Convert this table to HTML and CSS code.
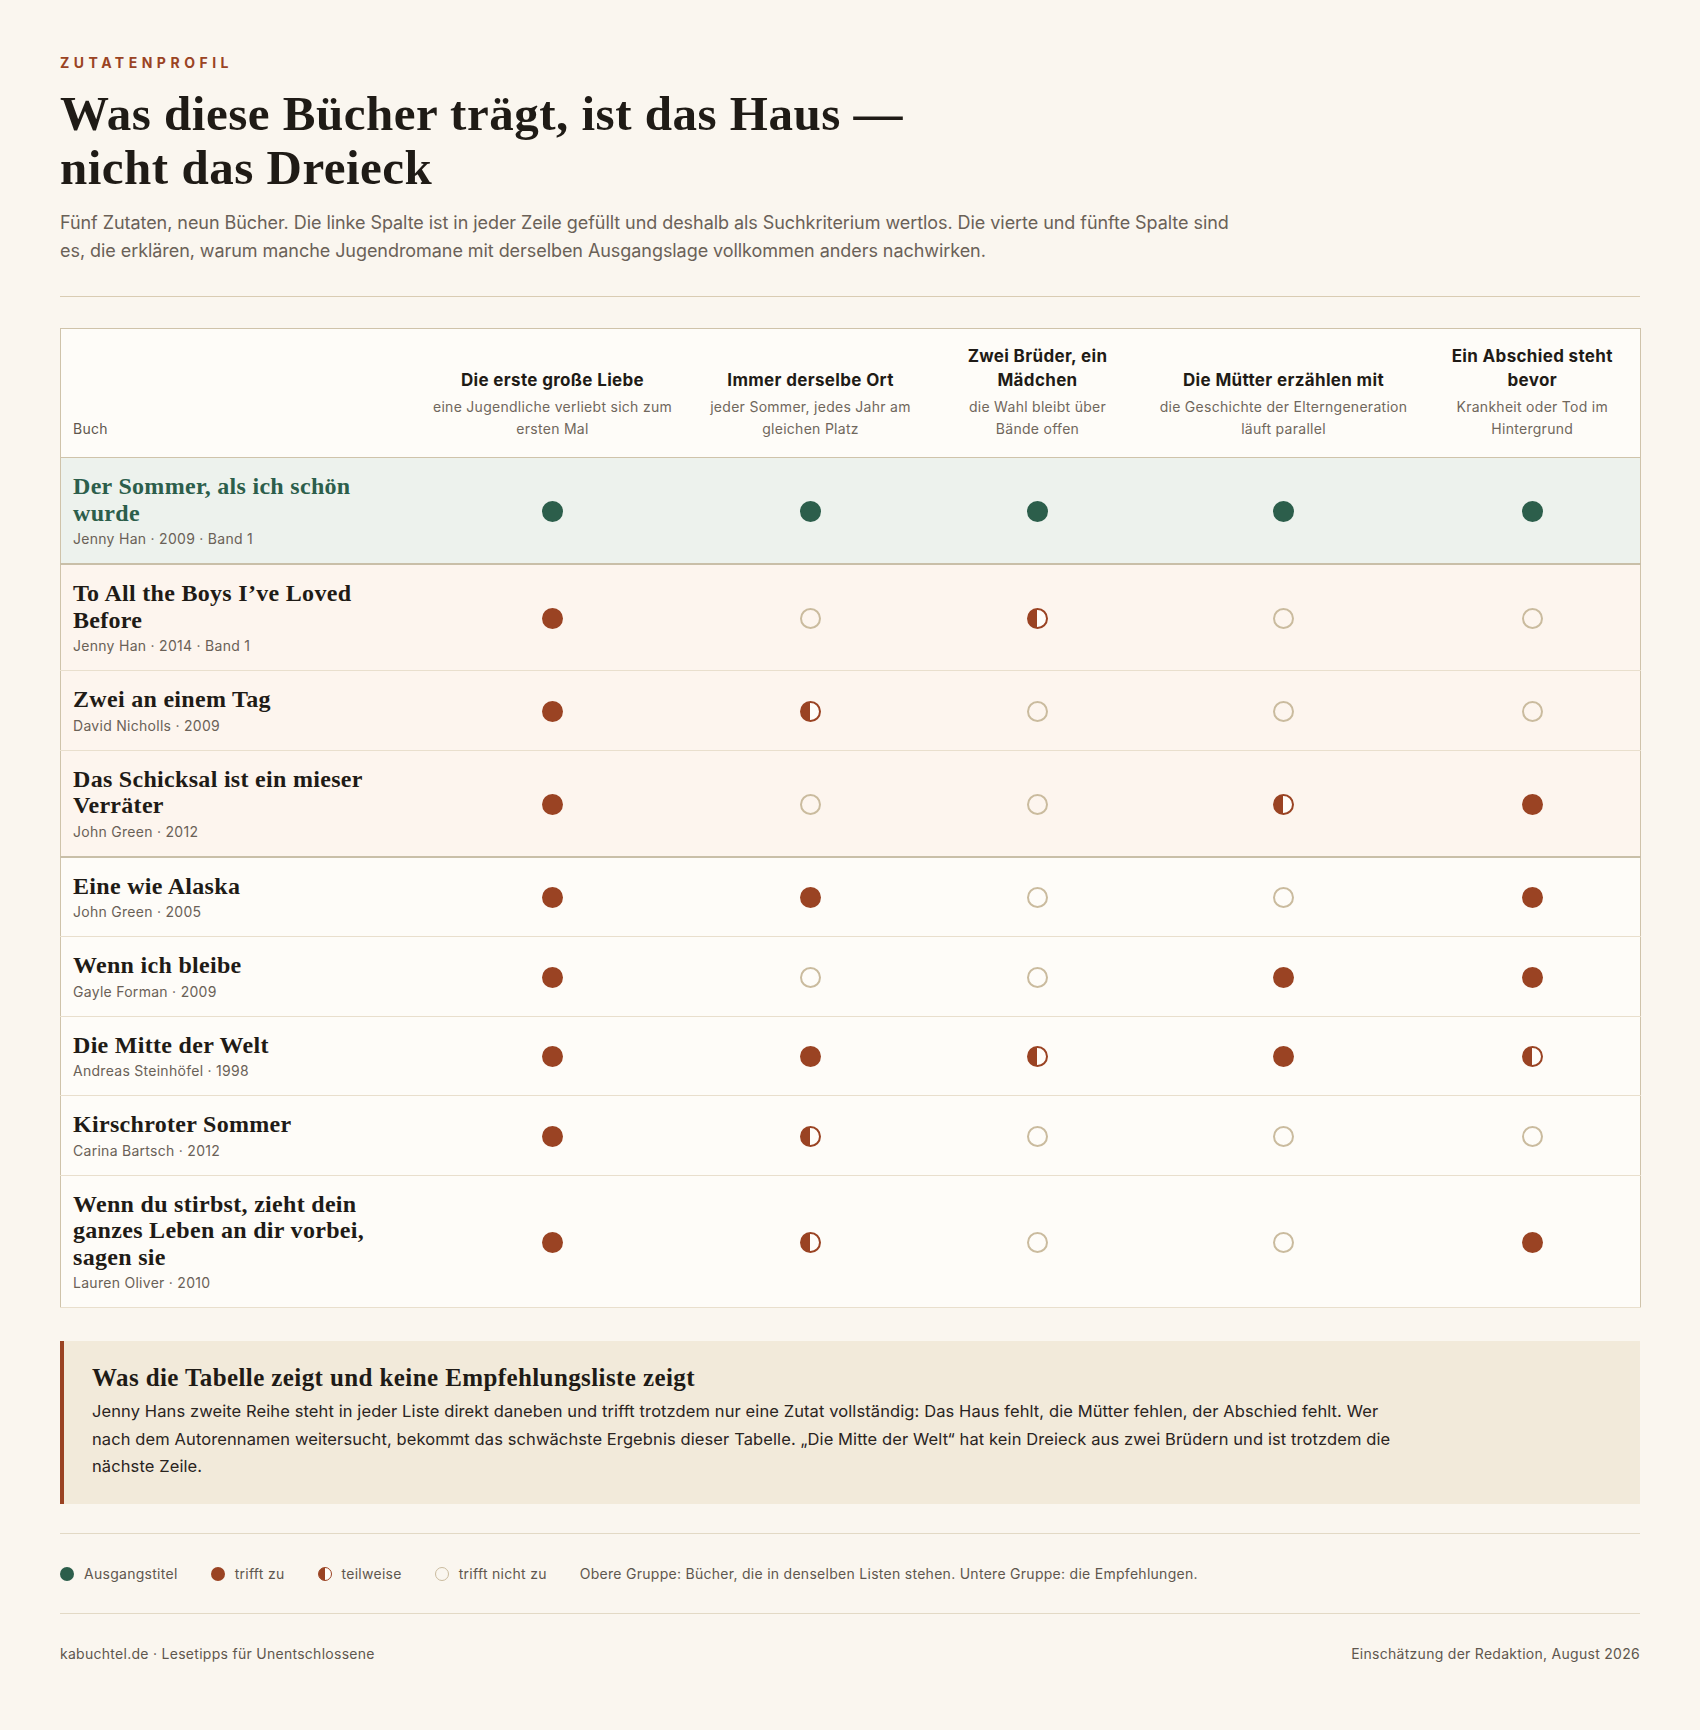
FILE: index.html
```html
<!DOCTYPE html>
<html lang="de">
<head>
<meta charset="utf-8">
<title>Zutatenprofil</title>
<link rel="stylesheet" href="styles.css">
</head>
<body>
<main class="page">
  <header class="intro">
    <div class="eyebrow">Zutatenprofil</div>
    <h1 class="headline">Was diese Bücher trägt, ist das Haus —<br>nicht das Dreieck</h1>
    <p class="lede">Fünf Zutaten, neun Bücher. Die linke Spalte ist in jeder Zeile gefüllt und deshalb als Suchkriterium wertlos. Die vierte und fünfte Spalte sind es, die erklären, warum manche Jugendromane mit derselben Ausgangslage vollkommen anders nachwirken.</p>
  </header>

  <table class="matrix">
    <colgroup>
      <col class="c-book"><col class="c-1"><col class="c-2"><col class="c-3"><col class="c-4"><col class="c-5">
    </colgroup>
    <thead>
      <tr>
        <th class="h-book">Buch</th>
        <th><span class="h-title">Die erste große Liebe</span><span class="h-sub">eine Jugendliche verliebt sich zum ersten Mal</span></th>
        <th><span class="h-title">Immer derselbe Ort</span><span class="h-sub">jeder Sommer, jedes Jahr am gleichen Platz</span></th>
        <th><span class="h-title">Zwei Brüder, ein Mädchen</span><span class="h-sub">die Wahl bleibt über Bände offen</span></th>
        <th><span class="h-title">Die Mütter erzählen mit</span><span class="h-sub">die Geschichte der Elterngeneration läuft parallel</span></th>
        <th><span class="h-title">Ein Abschied steht bevor</span><span class="h-sub">Krankheit oder Tod im Hintergrund</span></th>
      </tr>
    </thead>
    <tbody>
      <tr class="row-origin">
        <td class="book"><div class="b-title">Der Sommer, als ich schön wurde</div><div class="b-meta">Jenny Han · 2009 · Band 1</div></td>
        <td><span class="dot origin"></span></td>
        <td><span class="dot origin"></span></td>
        <td><span class="dot origin"></span></td>
        <td><span class="dot origin"></span></td>
        <td><span class="dot origin"></span></td>
      </tr>
      <tr class="row-list">
        <td class="book"><div class="b-title">To All the Boys I’ve Loved Before</div><div class="b-meta">Jenny Han · 2014 · Band 1</div></td>
        <td><span class="dot full"></span></td>
        <td><span class="dot none"></span></td>
        <td><span class="dot half"></span></td>
        <td><span class="dot none"></span></td>
        <td><span class="dot none"></span></td>
      </tr>
      <tr class="row-list">
        <td class="book"><div class="b-title">Zwei an einem Tag</div><div class="b-meta">David Nicholls · 2009</div></td>
        <td><span class="dot full"></span></td>
        <td><span class="dot half"></span></td>
        <td><span class="dot none"></span></td>
        <td><span class="dot none"></span></td>
        <td><span class="dot none"></span></td>
      </tr>
      <tr class="row-list row-last">
        <td class="book"><div class="b-title">Das Schicksal ist ein mieser Verräter</div><div class="b-meta">John Green · 2012</div></td>
        <td><span class="dot full"></span></td>
        <td><span class="dot none"></span></td>
        <td><span class="dot none"></span></td>
        <td><span class="dot half"></span></td>
        <td><span class="dot full"></span></td>
      </tr>
      <tr>
        <td class="book"><div class="b-title">Eine wie Alaska</div><div class="b-meta">John Green · 2005</div></td>
        <td><span class="dot full"></span></td>
        <td><span class="dot full"></span></td>
        <td><span class="dot none"></span></td>
        <td><span class="dot none"></span></td>
        <td><span class="dot full"></span></td>
      </tr>
      <tr>
        <td class="book"><div class="b-title">Wenn ich bleibe</div><div class="b-meta">Gayle Forman · 2009</div></td>
        <td><span class="dot full"></span></td>
        <td><span class="dot none"></span></td>
        <td><span class="dot none"></span></td>
        <td><span class="dot full"></span></td>
        <td><span class="dot full"></span></td>
      </tr>
      <tr>
        <td class="book"><div class="b-title">Die Mitte der Welt</div><div class="b-meta">Andreas Steinhöfel · 1998</div></td>
        <td><span class="dot full"></span></td>
        <td><span class="dot full"></span></td>
        <td><span class="dot half"></span></td>
        <td><span class="dot full"></span></td>
        <td><span class="dot half"></span></td>
      </tr>
      <tr>
        <td class="book"><div class="b-title">Kirschroter Sommer</div><div class="b-meta">Carina Bartsch · 2012</div></td>
        <td><span class="dot full"></span></td>
        <td><span class="dot half"></span></td>
        <td><span class="dot none"></span></td>
        <td><span class="dot none"></span></td>
        <td><span class="dot none"></span></td>
      </tr>
      <tr>
        <td class="book"><div class="b-title">Wenn du stirbst, zieht dein ganzes Leben an dir vorbei, sagen sie</div><div class="b-meta">Lauren Oliver · 2010</div></td>
        <td><span class="dot full"></span></td>
        <td><span class="dot half"></span></td>
        <td><span class="dot none"></span></td>
        <td><span class="dot none"></span></td>
        <td><span class="dot full"></span></td>
      </tr>
    </tbody>
  </table>

  <aside class="callout">
    <h2 class="callout-title">Was die Tabelle zeigt und keine Empfehlungsliste zeigt</h2>
    <p class="callout-text">Jenny Hans zweite Reihe steht in jeder Liste direkt daneben und trifft trotzdem nur eine Zutat vollständig: Das Haus fehlt, die Mütter fehlen, der Abschied fehlt. Wer nach dem Autorennamen weitersucht, bekommt das schwächste Ergebnis dieser Tabelle. „Die Mitte der Welt“ hat kein Dreieck aus zwei Brüdern und ist trotzdem die nächste Zeile.</p>
  </aside>

  <div class="legend">
    <span class="legend-item"><span class="ldot origin"></span>Ausgangstitel</span>
    <span class="legend-item"><span class="ldot full"></span>trifft zu</span>
    <span class="legend-item"><span class="ldot half"></span>teilweise</span>
    <span class="legend-item"><span class="ldot none"></span>trifft nicht zu</span>
    <span class="legend-note">Obere Gruppe: Bücher, die in denselben Listen stehen. Untere Gruppe: die Empfehlungen.</span>
  </div>

  <footer class="footer">
    <span>kabuchtel.de · Lesetipps für Unentschlossene</span>
    <span>Einschätzung der Redaktion, August 2026</span>
  </footer>
</main>
</body>
</html>
```

FILE: styles.css
```css
* { box-sizing: border-box; }

html, body {
  margin: 0;
  padding: 0;
  background: #faf6ef;
}

body {
  font-family: Inter, "Noto Sans", "Liberation Sans", sans-serif;
  color: #1f1b16;
}

.page {
  padding: 53px 60px 60px;
}

.eyebrow {
  font-size: 14px;
  font-weight: 700;
  letter-spacing: 4.5px;
  text-transform: uppercase;
  color: #9a4323;
  line-height: 20px;
}

.headline {
  margin: 14px 0 0;
  font-family: "Liberation Serif", "Times New Roman", serif;
  font-weight: 700;
  font-size: 49px;
  letter-spacing: 0.5px;
  line-height: 54px;
  color: #1f1b16;
}

.lede {
  margin: 14px 0 0;
  max-width: 1180px;
  font-size: 18px;
  letter-spacing: -0.06px;
  line-height: 28px;
  color: #6a6157;
}

.intro {
  padding-bottom: 31px;
  border-bottom: 1px solid #d9ccb3;
  margin-bottom: 31px;
}

/* Table */
.matrix {
  width: 100%;
  table-layout: fixed;
  border-collapse: collapse;
  background: #fefcf8;
  border: 1px solid #cfc3aa;
}

.c-book { width: 356px; }
.c-1 { width: 272px; }
.c-2 { width: 244px; }
.c-3 { width: 210px; }
.c-4 { width: 282px; }
.c-5 { width: 216px; }

.matrix th {
  vertical-align: bottom;
  text-align: center;
  padding: 15px 16px 17px;
  font-weight: 400;
  border-bottom: 1px solid #cfc3aa;
}

.matrix th.h-book {
  text-align: left;
  padding-left: 12px;
  font-size: 14px;
  letter-spacing: 0.02em;
  line-height: 22px;
  color: #5f574e;
}

.h-title {
  display: block;
  font-size: 17px;
  font-weight: 700;
  letter-spacing: 0.02em;
  line-height: 24px;
  color: #1f1b16;
  margin-bottom: 4px;
}

.h-sub {
  display: block;
  font-size: 14px;
  letter-spacing: 0.02em;
  line-height: 22px;
  color: #70675c;
}

.matrix td {
  text-align: center;
  vertical-align: middle;
  padding: 15px 12px 14px;
  border-bottom: 1px solid #e9dfcd;
}

.matrix td.book {
  text-align: left;
  padding-right: 20px;
}

.b-title {
  font-family: "Liberation Serif", "Times New Roman", serif;
  font-weight: 700;
  font-size: 24px;
  letter-spacing: 0.3px;
  line-height: 26.5px;
  color: #1f1b16;
}

.b-meta {
  margin-top: 3px;
  font-size: 14px;
  letter-spacing: 0.02em;
  line-height: 20px;
  color: #6a6157;
}

.row-origin td {
  background: #edf2ed;
  border-bottom: 2px solid #c9bfa8;
}

.row-origin .b-title { color: #2c5e4b; }

.row-list td { background: #fdf5ee; }

.row-last td { border-bottom: 2px solid #c9bfa8; }

/* Dots */
.dot {
  display: inline-block;
  width: 21px;
  height: 21px;
  border-radius: 50%;
  vertical-align: middle;
}

.dot.origin { background: #2c5e4b; }
.dot.full { background: #9a4323; }
.dot.none { border: 2px solid #cabb9e; background: transparent; }
.dot.half {
  border: 2px solid #9a4323;
  background: linear-gradient(90deg, #9a4323 50%, #fffdf9 50%);
}

/* Callout */
.callout {
  margin-top: 33px;
  background: #f2eada;
  border-left: 4px solid #9a4323;
  padding: 23px 28px 23px 28px;
}

.callout-title {
  margin: 0;
  font-family: "Liberation Serif", "Times New Roman", serif;
  font-weight: 700;
  font-size: 25px;
  letter-spacing: 0.4px;
  line-height: 28px;
  color: #1f1b16;
}

.callout-text {
  margin: 6px 0 0;
  max-width: 1320px;
  font-size: 16.5px;
  letter-spacing: 0.1px;
  line-height: 27.5px;
  color: #2a241e;
}

/* Legend */
.legend {
  margin-top: 29px;
  border-top: 1px solid #e2d9c5;
  border-bottom: 1px solid #e2d9c5;
  padding: 30px 0 29px;
  display: flex;
  align-items: center;
  gap: 33px;
  font-size: 14px;
  letter-spacing: 0.02em;
  line-height: 20px;
  color: #5f574e;
}

.legend-item {
  display: inline-flex;
  align-items: center;
  gap: 10px;
}

.ldot {
  display: inline-block;
  width: 14px;
  height: 14px;
  border-radius: 50%;
}

.ldot.origin { background: #2c5e4b; }
.ldot.full { background: #9a4323; }
.ldot.none { border: 1.5px solid #cabb9e; }
.ldot.half {
  border: 1.5px solid #9a4323;
  background: linear-gradient(90deg, #9a4323 50%, #fffdf9 50%);
}

/* Footer */
.footer {
  display: flex;
  justify-content: space-between;
  padding-top: 30px;
  font-size: 14px;
  letter-spacing: 0.02em;
  line-height: 20px;
  color: #5f574e;
}
```
